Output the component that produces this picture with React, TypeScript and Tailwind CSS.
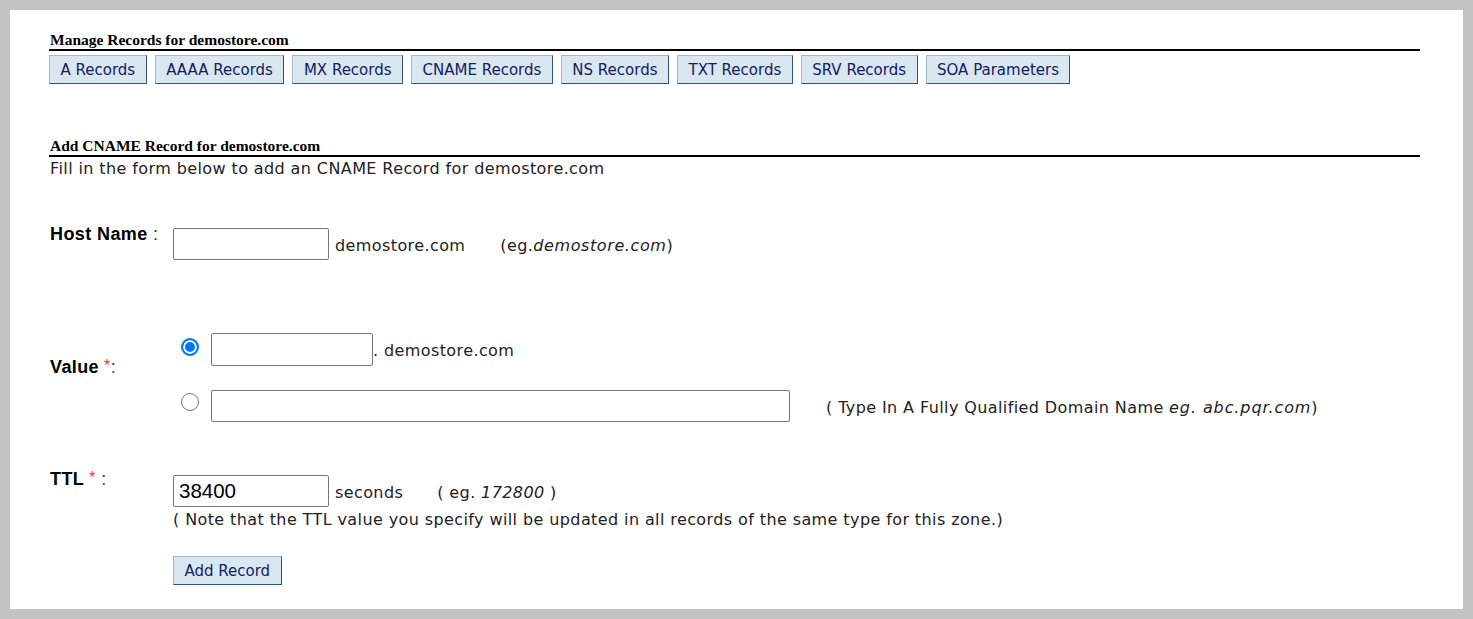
import React from "react";

const tabs = [
  "A Records",
  "AAAA Records",
  "MX Records",
  "CNAME Records",
  "NS Records",
  "TXT Records",
  "SRV Records",
  "SOA Parameters",
];

const btn =
  "h-[29px] px-[10.5px] border border-t-[#a3b8cc] border-l-[#a3b8cc] border-b-[#2f5479] border-r-[#2f5479] bg-[#d9e7f1] text-[#15205f] text-[15px] leading-[29px] font-['DejaVu_Sans',sans-serif] whitespace-nowrap";

const heading =
  "font-['Liberation_Serif',serif] font-bold text-[15.5px] leading-[18px] text-black border-b-2 border-black pl-px";

const field = "h-[32px] border border-[#767676] rounded-[2px] bg-white outline-none px-[5px] shrink-0";

const label =
  "w-[124px] shrink-0 pl-px font-['Liberation_Sans',Arial,sans-serif] text-[18px] leading-[20px] tracking-[0.4px] text-black";

const star = "text-[#ff2a2a] text-[16px] relative -top-[2px]";

const radio =
  "appearance-none m-0 shrink-0 w-[18px] h-[18px] rounded-full border-[1.5px] border-[#767676] bg-white checked:border-2 checked:border-[#0075ff] checked:bg-[#0075ff] checked:shadow-[inset_0_0_0_2px_#fff]";

export default function App() {
  return (
    <div className="min-h-[619px] bg-[#c3c3c3] p-[10px]">
      <div className="h-[599px] bg-white pl-[39px] pr-[43px] pt-[21px] text-[#222] font-['DejaVu_Sans',sans-serif] text-[16px] tracking-[0.4px]">
        {/* Record type tabs */}
        <h2 className={`${heading} tracking-normal`}>Manage Records for demostore.com</h2>
        <div className="flex gap-[8px] mt-[4px] tracking-normal">
          {tabs.map((t) => (
            <button key={t} className={btn}>
              {t}
            </button>
          ))}
        </div>

        {/* Form */}
        <h2 className={`${heading} tracking-normal mt-[53px]`}>Add CNAME Record for demostore.com</h2>
        <p className="leading-[18px] pl-px mt-[3px]">Fill in the form below to add an CNAME Record for demostore.com</p>

        {/* Host name */}
        <div className="flex items-start mt-[46px]">
          <div className={label}>
            <b>Host Name</b>
            <span className="text-[#333] font-normal"> :</span>
          </div>
          <div className="flex items-center mt-[4px]">
            <input type="text" className={`${field} w-[156px]`} />
            <span className="ml-[6px] mt-[4px]">demostore.com</span>
            <span className="ml-[35px] mt-[4px]">
              (eg.<i className="tracking-[0.6px]">demostore.com</i>)
            </span>
          </div>
        </div>

        {/* Value */}
        <div className="flex items-start mt-[73px]">
          <div className={`${label} mt-[24px]`}>
            <b>Value</b>
            <span className={`${star} ml-[5px]`}>*</span>
            <span className="text-[#333]">:</span>
          </div>
          <div className="flex flex-col">
            <div className="flex items-start">
              <input type="radio" name="value" defaultChecked className={`${radio} ml-[8px] mt-[5px]`} />
              <div className="flex items-center ml-[12px]">
                <input type="text" className={`${field} w-[162px] h-[33px]`} />
                <span className="mt-[3px]">. demostore.com</span>
              </div>
            </div>
            <div className="flex items-start mt-[24px]">
              <input type="radio" name="value" className={`${radio} ml-[8px] mt-[3px]`} />
              <div className="flex items-center ml-[12px]">
                <input type="text" className={`${field} w-[579px]`} />
                <span className="ml-[36px] mt-[4px]">
                  ( Type In A Fully Qualified Domain Name <i className="tracking-[0.9px]">eg. abc.pqr.com</i>)
                </span>
              </div>
            </div>
          </div>
        </div>

        {/* TTL */}
        <div className="flex items-start mt-[47px]">
          <div className={label}>
            <b>TTL</b>
            <span className={`${star} ml-[5px]`}>*</span>
            <span className="text-[#333]"> :</span>
          </div>
          <div className="flex flex-col items-start mt-[6px]">
            <div className="flex items-center">
              <input
                type="text"
                defaultValue="38400"
                className={`${field} w-[156px] text-[20.5px] text-black tracking-normal font-['Liberation_Sans',Arial,sans-serif]`}
              />
              <span className="ml-[6px] mt-[4px]">seconds</span>
              <span className="ml-[34px] mt-[4px]">
                ( eg. <i>172800</i> )
              </span>
            </div>
            <p className="leading-[20px] mt-[3px]">
              ( Note that the TTL value you specify will be updated in all records of the same type for this zone.)
            </p>
            <button className={`${btn} mt-[26px] tracking-normal`}>Add Record</button>
          </div>
        </div>
      </div>
    </div>
  );
}
